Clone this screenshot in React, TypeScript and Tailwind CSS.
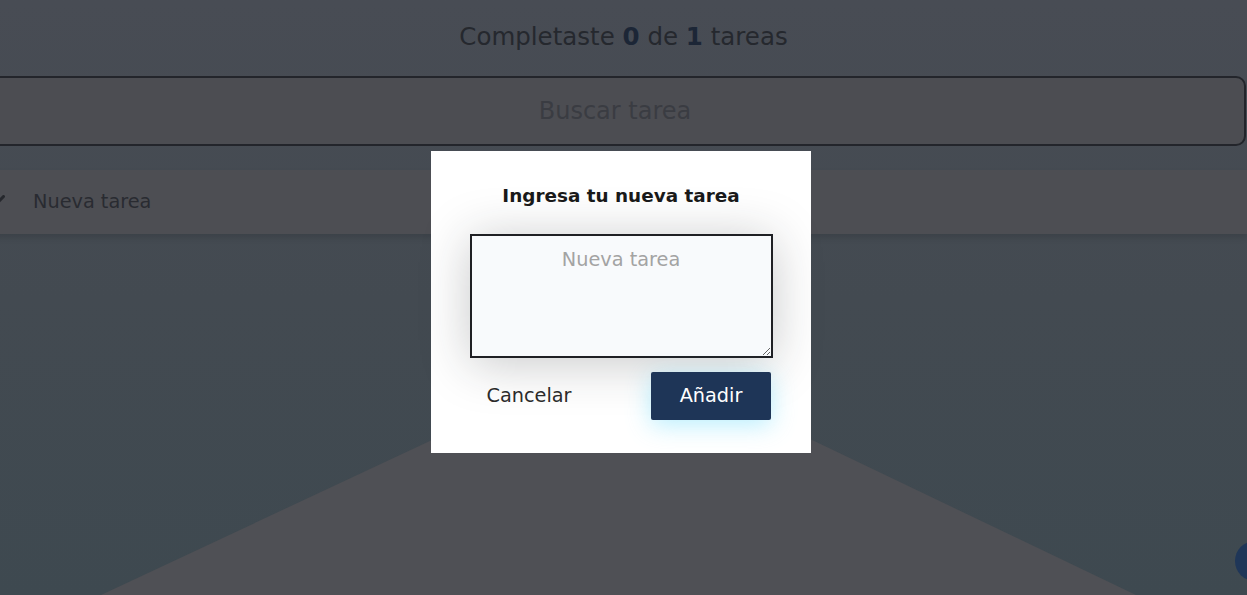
import React from "react";

const font = { fontFamily: '"DejaVu Sans", "Liberation Sans", sans-serif' };

const CheckIcon: React.FC = () => (
  <svg width="18" height="14" viewBox="0 0 18 14" fill="none">
    <path
      d="M1.5 7.5 L6.5 12 L16.5 1.5"
      stroke="#26282d"
      strokeWidth="3"
      strokeLinecap="round"
      strokeLinejoin="round"
    />
  </svg>
);

const TodoCounter: React.FC = () => (
  <h1 className="pt-[22px] text-center text-[24.5px] leading-[30px] text-[#25282e]">
    Completaste <b className="text-[#1c2636]">0</b> de{" "}
    <b className="text-[#1c2636]">1</b> tareas
  </h1>
);

const TodoSearch: React.FC = () => (
  <div className="ml-[-16px] mr-px mt-[24px]">
    <input
      placeholder="Buscar tarea"
      className="h-[70px] w-full rounded-[10px] border-2 border-[#23252b] bg-[#4c4d52] text-center text-[24px] text-[#3a3c42] placeholder:text-[#3a3c42] outline-none"
      style={font}
      readOnly
    />
  </div>
);

const TodoItem: React.FC<{ text: string }> = ({ text }) => (
  <li className="ml-[-40px] flex h-[64px] items-center bg-[#4d4e53] pl-[27px] shadow-[0_4px_6px_rgba(0,0,0,0.12)]">
    <span className="flex w-[18px] items-center">
      <CheckIcon />
    </span>
    <p className="ml-[28px] text-[19.3px] text-[#292b31]">{text}</p>
  </li>
);

const TodoForm: React.FC = () => (
  <form className="flex h-[302px] w-[380px] flex-col items-center bg-white pt-[33px]">
    <label className="text-[18.4px] font-bold leading-[24px] text-[#1a1a1a]">
      Ingresa tu nueva tarea
    </label>
    <textarea
      placeholder="Nueva tarea"
      className="mt-[26px] h-[124px] w-[303px] border-2 border-[#1f2024] bg-[#f8fafc] pt-[10px] text-center text-[19.3px] placeholder:text-[#a3a3a3] shadow-[0_5px_50px_rgba(32,35,41,0.25)] outline-none"
      style={font}
    />
    <div className="mt-[14px] flex w-[300px] justify-between">
      <button
        type="button"
        className="h-[48px] w-[120px] pr-[4px] text-[19.3px] text-[#2b2b2b]"
        style={font}
      >
        Cancelar
      </button>
      <button
        type="button"
        className="h-[48px] w-[120px] rounded-[2px] bg-[#1e3557] text-[19.3px] text-white shadow-[0_5px_25px_rgba(97,218,251,0.45)]"
        style={font}
      >
        Añadir
      </button>
    </div>
  </form>
);

export default function App() {
  return (
    <div
      className="relative h-[595px] w-full overflow-hidden bg-gradient-to-b from-[#484c54] via-[#434a51] to-[#3e4950]"
      style={font}
    >
      {/* fondo decorativo */}
      <svg
        className="absolute inset-0"
        width="1247"
        height="595"
        viewBox="0 0 1247 595"
      >
        <polygon points="624,350 101,595 1136,595" fill="#4f5055" />
      </svg>

      <div className="relative">
        <TodoCounter />
        <TodoSearch />
        <ul className="mt-[24px]">
          <TodoItem text="Nueva tarea" />
        </ul>
      </div>

      <div className="absolute left-[1235px] top-[541px] h-[40px] w-[40px] rounded-full bg-[#1f3658]" />

      {/* modal */}
      <div className="absolute inset-0 flex justify-center pt-[151px] pr-[5px]">
        <TodoForm />
      </div>
    </div>
  );
}
